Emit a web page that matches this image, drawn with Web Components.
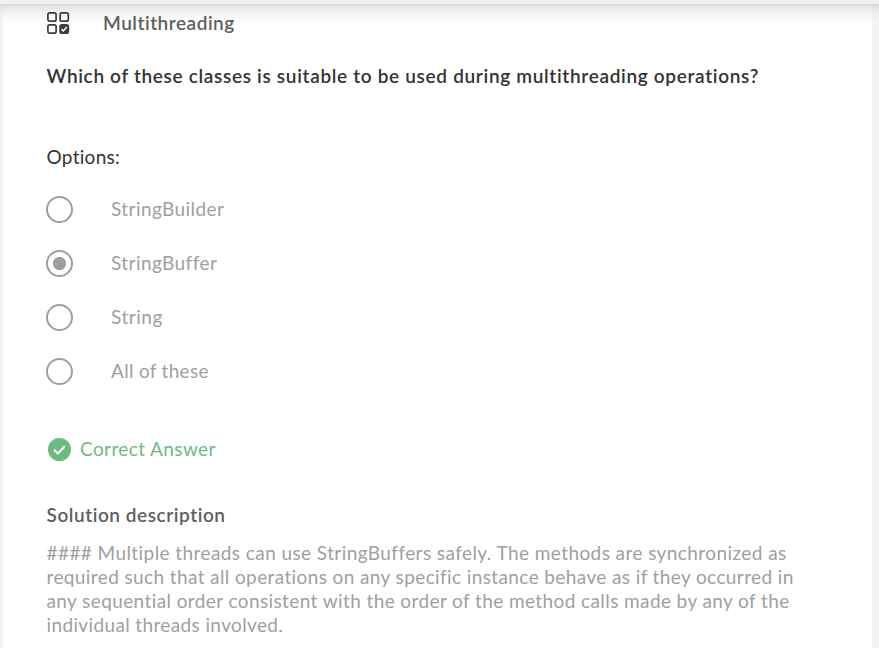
<!DOCTYPE html>
<html lang="en">
<head>
<meta charset="utf-8">
<title>Multithreading</title>
<style>
html, body { margin: 0; height: 100%; overflow: hidden; background: #f3f5f5; }
body { font: 19px/24px Lato, "Open Sans", sans-serif; font-variant-ligatures: none; color: #a0a0a0; }
</style>
</head>
<body>
<quiz-page>
  <quiz-heading>Multithreading</quiz-heading>
  <quiz-text style="--tracking:.675px; --weight:600; --ink:#333333; margin-bottom:57px">Which of these classes is suitable to be used during multithreading operations?</quiz-text>
  <quiz-text style="--tracking:.3px; --ink:#333333; margin-bottom:28px">Options:</quiz-text>
  <quiz-option>StringBuilder</quiz-option>
  <quiz-option>StringBuffer</quiz-option>
  <quiz-option style="--tracking:.55px">String</quiz-option>
  <quiz-option style="--tracking:.31px">All of these</quiz-option>
  <quiz-result>Correct Answer</quiz-result>
  <quiz-text style="--tracking:.55px; --weight:600; --ink:#5f6060; margin-bottom:14px">Solution description</quiz-text>
  <quiz-text style="--tracking:.42px">#### Multiple threads can use StringBuffers safely. The methods are synchronized as</quiz-text>
  <quiz-text style="--tracking:.39px">required such that all operations on any specific instance behave as if they occurred in</quiz-text>
  <quiz-text style="--tracking:.4px">any sequential order consistent with the order of the method calls made by any of the</quiz-text>
  <quiz-text style="--tracking:.37px">individual threads involved.</quiz-text>
</quiz-page>
<script>
function define(name, markup) {
  const template = document.createElement('template');
  template.innerHTML = markup;
  customElements.define(name, class extends HTMLElement {
    constructor() {
      super();
      this.attachShadow({ mode: 'open' }).append(template.content.cloneNode(true));
    }
  });
}

document.querySelectorAll('quiz-option')[1].setAttribute('checked', '');

define('quiz-page', `
  <style>
    :host { display: flex; flex-direction: column; height: 100vh; overflow: hidden; }
    header { flex: none; height: 4px; background: #f0f2f1; }
    .body { flex: 1; padding: 0 7px 0 3px; background: linear-gradient(#d6d8d8, #e4e6e6 4px, #eff1f1 11px, #f3f5f5 20px); }
    main { display: flex; flex-direction: column; box-sizing: border-box; height: 100%; padding: 7px 40px 0 43.5px;
      background: linear-gradient(#d9dada, #e7e8e8 4px, #f3f3f3 9px, #fbfbfb 15px, #fff 22px); }
  </style>
  <header></header>
  <div class="body"><main><slot></slot></main></div>`);

define('quiz-text', `
  <style>
    :host { display: block; flex: none; white-space: nowrap; color: var(--ink, inherit);
      font-weight: var(--weight, 400); letter-spacing: var(--tracking, .4px); }
  </style><slot></slot>`);

define('quiz-heading', `
  <style>
    :host { display: flex; flex: none; height: 24px; margin-bottom: 29px; gap: 32.5px; color: #5f6060; font-weight: 600; letter-spacing: .52px; }
    svg { flex: none; width: 24px; height: 24px; }
  </style>
  <svg viewBox="0 0 24 24" fill="none" stroke="#3b3c40" stroke-width="1.7">
    <rect x=".9" y="1.9" width="8.2" height="8.2" rx="1.7"/>
    <rect x="13.1" y="1.9" width="8.2" height="8.2" rx="1.7"/>
    <rect x=".9" y="13.9" width="8.2" height="8.2" rx="1.7"/>
    <rect x="13.1" y="13.9" width="8.2" height="8.2" rx="1.7" fill="#3b3c40"/>
    <path d="M14.5 18.3l1.8 1.6 3.5-3.8" stroke="#fff" stroke-width="1.5"/>
  </svg>
  <slot></slot>`);

define('quiz-option', `
  <style>
    :host { display: flex; flex: none; align-items: center; height: 24px; margin-bottom: 30px; gap: 38px; letter-spacing: var(--tracking, .43px); }
    i { flex: none; box-sizing: border-box; width: 27px; height: 27px; margin-left: -.5px; border: 2px solid #9e9e9e; border-radius: 50%; }
    :host([checked]) i { background: radial-gradient(circle, #9e9e9e 6.2px, transparent 7px); }
  </style>
  <i></i><slot></slot>`);

define('quiz-result', `
  <style>
    :host { display: flex; flex: none; align-items: center; height: 24px; margin: 24px 0 42px 1.5px; gap: 9px; color: #6ebb83; letter-spacing: .4px; }
    svg { flex: none; width: 23px; height: 23px; }
  </style>
  <svg viewBox="0 0 23 23" fill="none">
    <circle cx="11.5" cy="11.5" r="11.5" fill="#6bba80"/>
    <path d="M6.2 11.8l3.6 3.7 7-7.2" stroke="#fff" stroke-width="2"/>
  </svg>
  <slot></slot>`);
</script>
</body>
</html>
